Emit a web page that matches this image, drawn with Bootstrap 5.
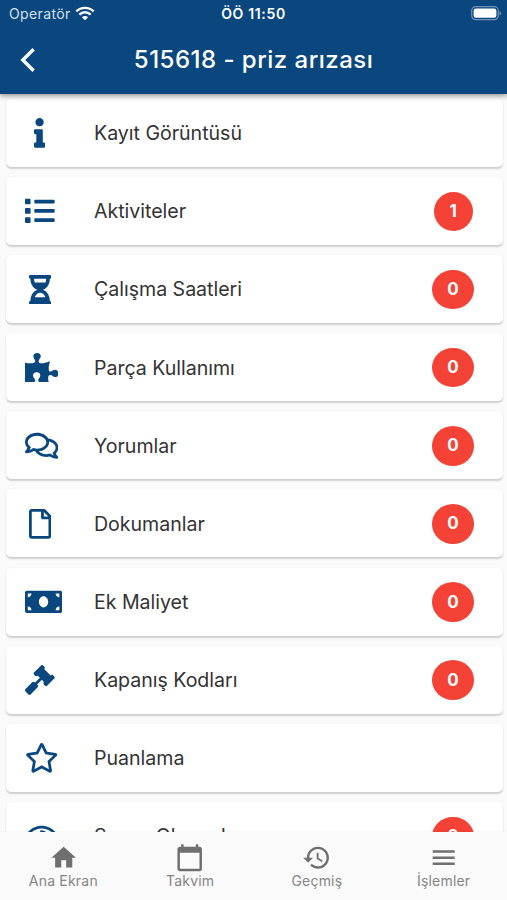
<!DOCTYPE html>
<html lang="tr">
<head>
<meta charset="utf-8">
<meta name="viewport" content="width=device-width, initial-scale=1">
<title>515618 - priz arızası</title>
<link rel="stylesheet" href="https://cdn.jsdelivr.net/npm/bootstrap@5.3.0/dist/css/bootstrap.min.css">
<style>
  body { font-family: Inter, "Liberation Sans", sans-serif; background: #fafafa; color: #333; height: 900px; overflow: hidden; }
  .app-header { height: 93.5px; background: #0b477f; color: #fff; box-shadow: 0 2px 5px rgba(0,0,0,.4); z-index: 2; }
  .status-row { height: 27px; }
  .status-side { width: 140px; }
  .operator { color: #d3e0ed; font-size: 14px; letter-spacing: .38px; padding-left: 1px; }
  .clock { font-weight: 600; font-size: 14px; letter-spacing: .65px; }
  .title-row { height: 66px; }
  .title-side { width: 56px; }
  .title-text { font-size: 24px; font-weight: 500; letter-spacing: .48px; }
  .item-list { padding: 5.2px 4.5px 0 6px; gap: 10.15px; }
  .item-card { height: 68px; flex: none; border: 0; border-radius: 5px; background: #fff; box-shadow: 0 1.5px 1.5px rgba(0,0,0,.17), 0 0 2px rgba(0,0,0,.04); padding: 1px 28.5px 0 19px; }
  .item-icon { width: 69px; color: #0b477f; }
  .item-icon svg { height: 29.7px; display: block; fill: currentColor; }
  .item-icon .narrow { margin-left: 9.3px; }
  .item-icon .mid { margin-left: 3.7px; }
  .item-label { font-size: 19.6px; letter-spacing: -.03px; padding-top: 1.2px; }
  .count { width: 42px; height: 39.5px; border-radius: 50%; background: #f44336; font-size: 17px; font-weight: 700; padding: 0; }
  .count.one { width: 39.5px; margin-right: 1px; }
  .tabs { height: 68.5px; background: #fafafa; color: #757575; box-shadow: 0 0 2px rgba(0,0,0,.08); z-index: 2; }
  .tabs svg { width: 29.4px; height: 29.4px; fill: #6f6f6f; display: block; }
  .tabs .nav-link { color: #858585; font-size: 14px; line-height: 18px; letter-spacing: .2px; padding: 11px 0 0; }
</style>
</head>
<body class="d-flex flex-column">
<header class="app-header flex-shrink-0 position-relative">
  <div class="status-row d-flex align-items-center justify-content-between">
    <div class="status-side d-flex align-items-center ps-2">
      <span class="operator">Operatör</span>
      <svg class="ms-1" width="20" height="15" viewBox="0 0 20 15" fill="none" stroke="#fff" stroke-width="2.4"><path d="M1.3 5.4a12.4 12.4 0 0 1 17.4 0M4.4 8.6a8 8 0 0 1 11.2 0"/><path d="M10 14.3 6.9 11.2a4.4 4.4 0 0 1 6.2 0z" fill="#fff" stroke="none"/></svg>
    </div>
    <span class="clock">ÖÖ 11:50</span>
    <div class="status-side d-flex justify-content-end pe-1">
      <svg width="32" height="15" viewBox="0 0 32 15"><rect x=".7" y=".7" width="26.6" height="13" rx="4" fill="none" stroke="#6f93b6" stroke-width="1.2"/><rect x="2.6" y="2.6" width="22.8" height="9.2" rx="2.3" fill="#fff"/><path d="M28.6 5v4.4q1.6-.7 1.6-2.2T28.6 5z" fill="#6f93b6"/></svg>
    </div>
  </div>
  <div class="title-row d-flex align-items-center justify-content-between">
    <svg width="56" height="30" viewBox="0 0 56 30" fill="none" stroke="#fff" stroke-width="3.4"><path d="M33.6 4.2 22.8 15l10.8 10.8"/></svg>
    <span class="title-text">515618 - priz arızası</span>
    <span class="title-side"></span>
  </div>
</header>

<main class="item-list d-flex flex-column flex-grow-1 overflow-hidden">
  <div class="item-card card flex-row align-items-center">
    <div class="item-icon"><svg class="narrow" viewBox="0 0 192 512"><path d="M20 424.229h20V279.771H20c-11.046 0-20-8.954-20-20V212c0-11.046 8.954-20 20-20h112c11.046 0 20 8.954 20 20v212.229h20c11.046 0 20 8.954 20 20V492c0 11.046-8.954 20-20 20H20c-11.046 0-20-8.954-20-20v-47.771c0-11.046 8.954-20 20-20zM96 0C56.235 0 24 32.235 24 72s32.235 72 72 72 72-32.235 72-72S135.764 0 96 0z"/></svg></div>
    <span class="item-label">Kayıt Görüntüsü</span>
  </div>
  <div class="item-card card flex-row align-items-center">
    <div class="item-icon"><svg viewBox="0 0 512 512"><path d="M80 368H16a16 16 0 0 0-16 16v64a16 16 0 0 0 16 16h64a16 16 0 0 0 16-16v-64a16 16 0 0 0-16-16zm0-320H16A16 16 0 0 0 0 64v64a16 16 0 0 0 16 16h64a16 16 0 0 0 16-16V64a16 16 0 0 0-16-16zm0 160H16a16 16 0 0 0-16 16v64a16 16 0 0 0 16 16h64a16 16 0 0 0 16-16v-64a16 16 0 0 0-16-16zm416 176H176a16 16 0 0 0-16 16v32a16 16 0 0 0 16 16h320a16 16 0 0 0 16-16v-32a16 16 0 0 0-16-16zm0-320H176a16 16 0 0 0-16 16v32a16 16 0 0 0 16 16h320a16 16 0 0 0 16-16V80a16 16 0 0 0-16-16zm0 160H176a16 16 0 0 0-16 16v32a16 16 0 0 0 16 16h320a16 16 0 0 0 16-16v-32a16 16 0 0 0-16-16z"/></svg></div>
    <span class="item-label">Aktiviteler</span>
    <span class="count one badge ms-auto d-flex align-items-center justify-content-center">1</span>
  </div>
  <div class="item-card card flex-row align-items-center">
    <div class="item-icon"><svg class="mid" viewBox="0 0 384 512"><path d="M360 0H24C10.745 0 0 10.745 0 24v16c0 13.255 10.745 24 24 24 0 90.965 51.016 167.734 120.842 192C75.016 280.266 24 357.035 24 448c-13.255 0-24 10.745-24 24v16c0 13.255 10.745 24 24 24h336c13.255 0 24-10.745 24-24v-16c0-13.255-10.745-24-24-24 0-90.965-51.016-167.734-120.842-192C308.984 231.734 360 154.965 360 64c13.255 0 24-10.745 24-24V24c0-13.255-10.745-24-24-24zm-75.078 384H99.08c17.059-46.797 52.096-80 92.92-80 40.821 0 75.862 33.196 92.922 80zm.019-256H99.078C91.988 108.548 88 86.748 88 64h208c0 22.805-3.987 44.587-11.059 64z"/></svg></div>
    <span class="item-label">Çalışma Saatleri</span>
    <span class="count badge ms-auto d-flex align-items-center justify-content-center">0</span>
  </div>
  <div class="item-card card flex-row align-items-center">
    <div class="item-icon"><svg viewBox="0 0 576 512"><path d="M519.442 288.651c-41.519 0-59.5 31.593-82.058 31.593C377.409 320.244 432 144 432 144s-196.288 80-196.288-3.297c0-35.827 36.288-46.25 36.288-85.985C272 19.216 243.885 0 210.539 0c-34.654 0-66.366 18.891-66.366 56.346 0 41.364 31.711 59.277 31.711 81.75C175.885 207.719 0 166.758 0 166.758v333.237s178.635 41.047 178.635-28.662c0-22.473-40-40.107-40-81.471 0-37.456 29.25-56.346 63.577-56.346 33.673 0 61.788 19.216 61.788 54.717 0 39.735-36.288 50.158-36.288 85.985 0 60.803 129.675 25.73 181.23 25.73 0 0-34.725-120.101 25.827-120.101 35.962 0 46.423 36.152 86.308 36.152C556.712 416 576 387.99 576 354.443c0-34.199-18.962-65.792-56.558-65.792z"/></svg></div>
    <span class="item-label">Parça Kullanımı</span>
    <span class="count badge ms-auto d-flex align-items-center justify-content-center">0</span>
  </div>
  <div class="item-card card flex-row align-items-center">
    <div class="item-icon"><svg viewBox="0 0 576 512"><path d="M532 386.2c27.5-27.1 44-61.1 44-98.2 0-80-76.5-146.1-176.2-157.9C368.3 72.5 294.3 32 208 32 93.1 32 0 103.6 0 192c0 37 16.5 71 44 98.2-15.3 30.7-37.3 54.5-37.7 54.9-6.3 6.7-8.1 16.5-4.4 25 3.6 8.5 12 14 21.2 14 53.5 0 96.7-20.2 125.2-38.8 9.2 2.1 18.7 3.7 28.4 4.9C208.1 407.6 281.8 448 368 448c20.8 0 40.8-2.4 59.8-6.8C456.3 459.7 499.4 480 553 480c9.2 0 17.5-5.5 21.2-14 3.6-8.5 1.9-18.3-4.4-25-.4-.3-22.5-24.1-37.8-54.8zm-392.8-92.3L122.1 305c-14.1 9.1-28.5 16.3-43.1 21.4 2.7-4.7 5.4-9.7 8-14.8l15.5-31.1L77.7 256C64.2 242.6 48 220.7 48 192c0-60.7 73.3-112 160-112s160 51.3 160 112-73.3 112-160 112c-16.5 0-33-1.9-49-5.6l-19.8-4.5zM498.3 352l-24.7 24.4 15.5 31.1c2.6 5.1 5.3 10.1 8 14.8-14.6-5.1-29-12.3-43.1-21.4l-17.1-11.1-19.9 4.6c-16 3.7-32.5 5.6-49 5.6-54 0-102.2-20.1-131.3-49.7C338 339.5 416 272.9 416 192c0-3.4-.4-6.7-.7-10C479.7 196.5 528 238.8 528 288c0 28.7-16.2 50.6-29.7 64z"/></svg></div>
    <span class="item-label">Yorumlar</span>
    <span class="count badge ms-auto d-flex align-items-center justify-content-center">0</span>
  </div>
  <div class="item-card card flex-row align-items-center">
    <div class="item-icon"><svg class="mid" viewBox="0 0 384 512"><path d="M369.9 97.9L286 14C277 5 264.8-.1 252.1-.1H48C21.5 0 0 21.5 0 48v416c0 26.5 21.5 48 48 48h288c26.5 0 48-21.5 48-48V131.9c0-12.7-5.1-25-14.1-34zM332.1 128H256V51.9l76.1 76.1zM48 464V48h160v104c0 13.3 10.7 24 24 24h104v288H48z"/></svg></div>
    <span class="item-label">Dokumanlar</span>
    <span class="count badge ms-auto d-flex align-items-center justify-content-center">0</span>
  </div>
  <div class="item-card card flex-row align-items-center">
    <div class="item-icon"><svg viewBox="0 0 640 512"><path d="M608 64H32C14.33 64 0 78.33 0 96v320c0 17.67 14.33 32 32 32h576c17.67 0 32-14.33 32-32V96c0-17.67-14.33-32-32-32zM48 400v-64c35.35 0 64 28.65 64 64H48zm0-224v-64h64c0 35.35-28.65 64-64 64zm272 176c-44.19 0-80-42.99-80-96 0-53.02 35.82-96 80-96s80 42.98 80 96c0 53.03-35.83 96-80 96zm272 48h-64c0-35.35 28.65-64 64-64v64zm0-224c-35.35 0-64-28.65-64-64h64v64z"/></svg></div>
    <span class="item-label">Ek Maliyet</span>
    <span class="count badge ms-auto d-flex align-items-center justify-content-center">0</span>
  </div>
  <div class="item-card card flex-row align-items-center">
    <div class="item-icon"><svg viewBox="0 0 512 512"><path d="M504.971 199.362l-22.627-22.627c-9.373-9.373-24.569-9.373-33.941 0l-5.657 5.657L329.608 69.255l5.657-5.657c9.373-9.373 9.373-24.569 0-33.941L312.638 7.029c-9.373-9.373-24.569-9.373-33.941 0L154.246 131.48c-9.373 9.373-9.373 24.569 0 33.941l22.627 22.627c9.373 9.373 24.569 9.373 33.941 0l5.657-5.657 39.598 39.598-81.04 81.04-5.657-5.657c-12.497-12.497-32.758-12.497-45.255 0L9.373 412.118c-12.497 12.497-12.497 32.758 0 45.255l45.255 45.255c12.497 12.497 32.758 12.497 45.255 0l114.745-114.745c12.497-12.497 12.497-32.758 0-45.255l-5.657-5.657 81.04-81.04 39.598 39.598-5.657 5.657c-9.373 9.373-9.373 24.569 0 33.941l22.627 22.627c9.373 9.373 24.569 9.373 33.941 0l124.451-124.451c9.372-9.372 9.372-24.568 0-33.941z"/></svg></div>
    <span class="item-label">Kapanış Kodları</span>
    <span class="count badge ms-auto d-flex align-items-center justify-content-center">0</span>
  </div>
  <div class="item-card card flex-row align-items-center">
    <div class="item-icon"><svg viewBox="0 0 576 512"><path d="M528.1 171.5L382 150.2 316.7 17.8c-11.7-23.6-45.6-23.9-57.4 0L194 150.2 47.9 171.5c-26.2 3.8-36.7 36.1-17.7 54.6l105.7 103-25 145.5c-4.5 26.3 23.2 46 46.4 33.7L288 439.6l130.7 68.7c23.2 12.2 50.9-7.4 46.4-33.7l-25-145.5 105.7-103c19-18.5 8.5-50.8-17.7-54.6zM388.6 312.3l23.7 138.4L288 385.4l-124.3 65.3 23.7-138.4-100.6-98 139-20.2 62.2-126 62.2 126 139 20.2-100.6 98z"/></svg></div>
    <span class="item-label">Puanlama</span>
  </div>
  <div class="item-card card flex-row align-items-center">
    <div class="item-icon"><svg viewBox="0 0 576 512"><path d="M288 144a110.94 110.94 0 0 0-31.24 5 55.4 55.4 0 0 1 7.24 27 56 56 0 0 1-56 56 55.4 55.4 0 0 1-27-7.24A111.71 111.71 0 1 0 288 144zm284.52 97.4C518.29 135.59 410.93 64 288 64S57.68 135.64 3.48 241.41a32.35 32.35 0 0 0 0 29.19C57.71 376.41 165.07 448 288 448s230.32-71.64 284.52-177.41a32.35 32.35 0 0 0 0-29.19zM288 400c-98.65 0-189.09-55-237.93-144C98.91 167 189.34 112 288 112s189.09 55 237.93 144C477.1 345 386.66 400 288 400z"/></svg></div>
    <span class="item-label">Sayaç Okumaları</span>
    <span class="count badge ms-auto d-flex align-items-center justify-content-center">0</span>
  </div>
</main>

<nav class="tabs nav nav-justified flex-nowrap flex-shrink-0 position-relative">
  <a class="nav-link d-flex flex-column align-items-center" href="#"><svg viewBox="0 0 24 24"><path d="M10 20v-6h4v6h5v-8h3L12 3 2 12h3v8z"/></svg>Ana Ekran</a>
  <a class="nav-link d-flex flex-column align-items-center" href="#"><svg viewBox="0 0 24 24"><path d="M20 3h-1V1h-2v2H7V1H5v2H4c-1.1 0-2 .9-2 2v16c0 1.1.9 2 2 2h16c1.1 0 2-.9 2-2V5c0-1.1-.9-2-2-2zm0 18H4V8h16v13z"/></svg>Takvim</a>
  <a class="nav-link d-flex flex-column align-items-center" href="#"><svg viewBox="0 0 24 24"><path d="M13 3c-4.97 0-9 4.03-9 9H1l3.89 3.89.07.14L9 12H6c0-3.87 3.13-7 7-7s7 3.13 7 7-3.13 7-7 7c-1.93 0-3.68-.79-4.94-2.06l-1.42 1.42C8.27 19.99 10.51 21 13 21c4.97 0 9-4.03 9-9s-4.03-9-9-9zm-1 5v5l4.28 2.54.72-1.21-3.5-2.08V8H12z"/></svg>Geçmiş</a>
  <a class="nav-link d-flex flex-column align-items-center" href="#"><svg viewBox="0 0 24 24"><path d="M3 18h18v-2H3v2zm0-5h18v-2H3v2zm0-7v2h18V6H3z"/></svg>İşlemler</a>
</nav>
<script src="https://cdn.jsdelivr.net/npm/bootstrap@5.3.0/dist/js/bootstrap.bundle.min.js"></script>
</body>
</html>
